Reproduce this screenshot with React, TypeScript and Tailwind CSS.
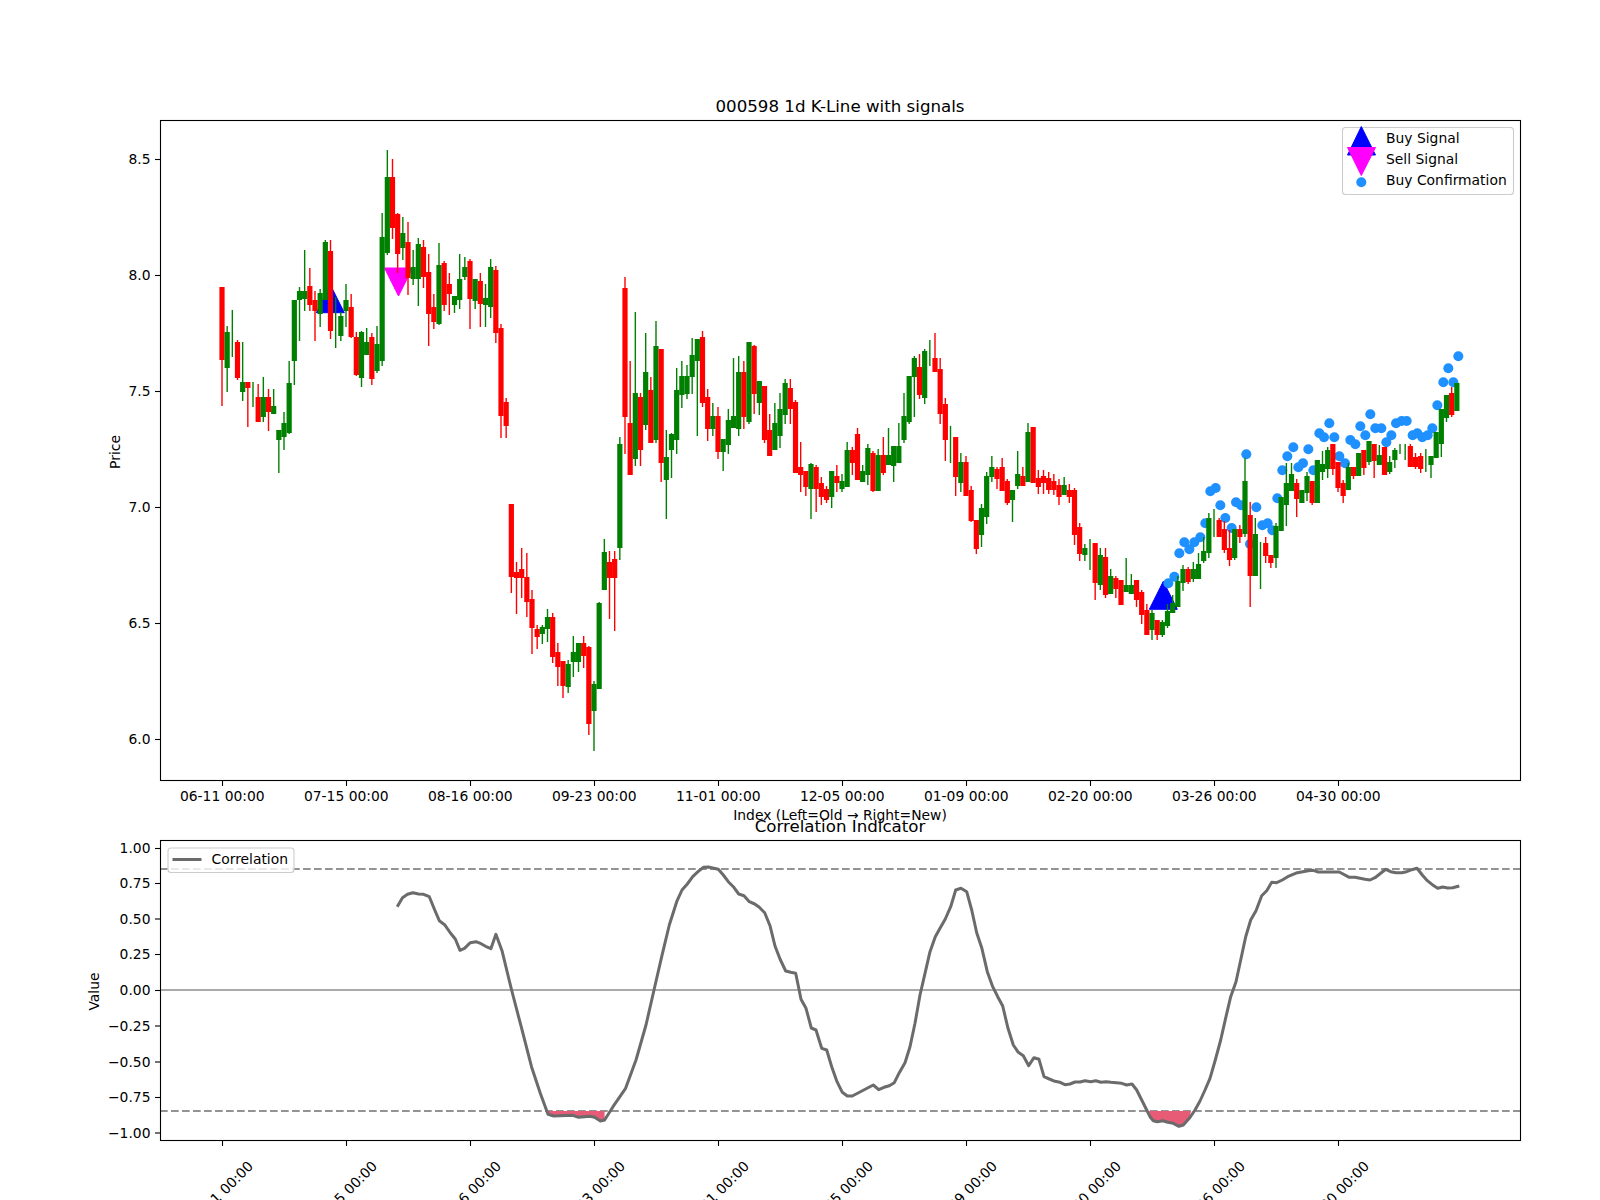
const C: number[][] = [
[1,287,406,287,360],[0,326,392,332,368],[0,310,357,0,0],[1,340,380,342,378],[0,342,401,382,392],[1,382,427,382,388],[0,382,407,0,0],[1,384,422,397,422],[0,377,422,397,417],[1,389,431,397,412],
[0,389,414,406,414],[0,430,473,430,440],[0,412,450,423,437],[0,361,434,383,433],[0,300,385,300,361],[0,287,341,291,300],[0,250,311,291,299],[1,268,311,286,305],[1,291,341,300,311],[0,289,327,293,314],
[0,240,300,242,300],[1,240,339,251,331],[0,297,348,0,0],[0,312,341,316,336],[0,284,327,300,311],[1,294,338,307,337],[1,332,376,337,375],[0,331,387,332,378],[0,328,355,342,355],[1,333,385,337,379],
[0,326,373,344,371],[0,213,366,237,361],[0,150,255,177,253],[1,159,239,177,228],[1,213,273,214,254],[0,217,260,233,248],[1,222,295,242,278],[0,250,285,267,279],[0,238,306,244,279],[1,240,288,247,277],
[1,254,346,272,314],[1,294,329,307,322],[0,243,325,265,324],[1,261,311,263,305],[1,273,315,284,294],[0,296,313,296,305],[0,254,309,279,300],[0,257,280,267,277],[1,259,329,261,299],[0,279,309,279,301],
[1,273,327,281,304],[0,284,327,298,305],[0,259,318,267,307],[1,266,343,270,333],[1,324,438,328,416],[1,398,438,402,426],[1,504,593,504,577],[1,562,614,572,578],[1,548,598,569,578],[1,553,617,577,602],
[1,590,654,599,628],[1,625,649,629,637],[0,625,644,627,634],[0,609,642,617,629],[1,613,663,617,657],[1,643,686,652,667],[1,661,698,661,686],[0,660,693,664,687],[0,636,677,652,662],[0,643,672,643,662],
[1,636,668,643,656],[1,646,735,647,724],[0,681,751,684,711],[0,602,689,603,689],[0,539,590,552,590],[1,551,619,562,578],[1,551,631,559,578],[0,437,560,444,548],[1,277,454,288,417],[1,361,475,423,475],
[0,312,466,393,459],[1,393,466,397,450],[0,333,430,372,425],[1,377,443,390,443],[0,321,443,346,440],[1,349,482,349,463],[0,430,519,457,480],[0,433,478,434,450],[0,368,454,390,440],[0,361,408,376,395],
[0,365,399,376,394],[0,338,394,355,377],[0,339,436,339,361],[1,331,407,337,403],[1,389,441,397,429],[0,403,436,416,429],[1,407,459,416,452],[0,439,471,439,452],[0,409,454,420,445],[0,358,427,416,428],
[0,356,436,372,429],[1,361,429,372,417],[0,342,424,342,422],[1,345,414,346,394],[0,381,415,381,403],[1,386,443,386,440],[1,414,456,430,456],[0,403,450,423,450],[0,393,448,409,436],[0,379,424,383,415],
[1,379,424,388,409],[1,400,473,402,473],[1,442,492,467,475],[1,471,496,471,487],[0,463,519,464,489],[1,465,512,467,489],[1,477,505,483,497],[1,486,503,489,500],[0,471,508,471,497],[1,465,492,476,483],
[0,474,492,481,489],[0,442,487,450,487],[1,447,475,450,463],[1,428,480,434,480],[0,465,482,471,482],[0,444,485,448,475],[1,451,492,453,491],[0,449,491,455,491],[1,437,475,455,473],[0,428,465,455,465],
[0,446,482,446,466],[0,423,463,446,463],[0,393,443,416,440],[0,376,424,376,422],[0,356,417,358,377],[1,354,399,367,395],[0,349,404,351,398],[0,340,366,0,0],[1,333,372,358,372],[1,358,424,369,414],
[1,398,461,404,440],[0,426,463,0,0],[1,437,496,437,477],[0,453,492,462,483],[1,456,496,462,496],[1,486,522,490,521],[1,520,554,520,549],[0,504,547,508,535],[0,472,524,476,517],[0,456,482,467,477],
[1,467,489,469,479],[1,458,491,467,491],[1,479,505,481,503],[0,490,522,490,500],[0,451,489,474,486],[1,467,486,476,486],[0,423,482,432,482],[1,427,483,427,483],[1,470,494,478,487],[1,470,494,476,483],
[1,472,494,478,490],[1,474,495,481,490],[1,479,505,485,497],[0,477,495,485,495],[1,484,503,490,497],[1,488,545,490,535],[1,523,561,527,554],[0,544,561,548,555],[0,539,570,0,0],[1,543,600,543,583],
[0,548,590,555,585],[1,548,598,557,595],[0,569,594,576,594],[1,576,598,578,589],[1,580,605,580,605],[0,558,592,585,592],[0,574,594,585,594],[1,580,607,580,600],[1,590,624,592,615],[1,604,635,610,635],
[0,610,640,613,630],[1,620,640,620,635],[0,620,637,622,635],[0,604,628,611,626],[0,595,613,603,613],[0,576,607,581,607],[0,565,591,569,583],[1,567,584,569,582],[0,562,582,569,579],[0,553,579,564,579],
[0,537,563,551,561],[0,513,558,518,553],[0,509,537,0,0],[1,518,537,520,537],[1,521,553,529,550],[1,530,566,548,560],[0,529,560,529,558],[1,525,543,529,537],[0,458,537,481,534],[1,502,607,515,576],
[0,518,576,534,576],[0,542,589,0,0],[1,537,563,543,556],[1,555,568,555,563],[0,523,568,526,558],[0,497,531,497,531],[0,463,526,483,505],[0,463,491,474,491],[1,479,517,483,499],[0,490,503,490,503],
[0,472,501,476,493],[1,481,505,481,503],[0,460,503,460,503],[0,451,480,464,472],[0,447,478,450,469],[1,444,475,444,469],[1,462,492,462,488],[1,480,503,483,496],[0,463,490,467,490],[1,467,479,467,476],
[0,453,476,453,476],[1,450,475,450,468],[0,441,465,441,462],[1,444,478,444,461],[0,445,465,455,465],[1,447,475,447,475],[0,456,474,462,472],[0,448,468,450,460],[0,444,454,0,0],[0,444,460,0,0],
[1,444,467,446,467],[1,453,469,457,467],[1,453,473,456,469],[0,449,472,0,0],[0,456,478,456,465],[0,432,458,432,458],[0,409,457,409,444],[0,395,422,395,418],[1,387,417,393,415],[0,383,411,383,411],
];

const D: number[][] = [
[1075,49],[1045,85],[1030,127],[1060,127],[1012,196],[811,223],[688,250],[781,259],[905,243],[888,250],[920,243],[826,265],[844,265],[658,280],[672,292],[703,292],[625,328],[580,322],[562,349],[874,286],[796,286],[751,300],[766,313],[859,307],[938,286],[952,280],[967,292],[983,286],[997,265],[718,349],[735,370],[640,391],[609,370],[595,382],[547,391],[439,343],[347,444],[331,454],[361,496],[408,487],[423,496],[469,502],[532,475],[376,534],[316,550],[301,592],[283,607],[268,628],[253,607],[238,640],[223,710],[205,730],[395,564],[487,556],[503,550],[517,571],[450,612],
];

const L: number[][] = [
[397.2,906.7],[402.5,897.7],[407.5,894.3],[412.8,892.7],[418.6,894],[423.6,894.3],[429.3,896.7],[434.3,909],[439.3,920.7],[444.6,924.7],[450.4,933],[455.3,939],[460,950.3],[464.5,948.3],[470.3,942.7],[476,941.7],[481,943.7],[485.6,946.3],[490.9,948.7],[495.9,934.3],[502,950.7],[511.6,990],[521.2,1026.7],[531.5,1066.7],[540.3,1093.3],[548,1114.3],[553.7,1116],[572.8,1115.3],[578.6,1117.3],[590,1116.3],[594.6,1117.3],[600.4,1121],[604.6,1120],[613,1106.7],[625.6,1088.3],[636,1060],[646,1025],[654,990],[661.7,956.7],[669.3,925],[676.7,901.7],[682,890],[687.3,884],[692.7,876.7],[698,871.7],[703.3,867.3],[708.3,867],[718.3,869.3],[723.3,875],[728.3,881.7],[733.3,886.7],[738.7,894],[744,895.7],[749.3,901.7],[754.7,904],[759.3,907.3],[764.7,912.7],[770,925.7],[775,946],[780,959],[785.7,971],[790.7,972.3],[795.7,973.3],[801,999.3],[806,1008.3],[811.3,1028],[816,1030],[821.7,1048.3],[826.7,1050],[831.7,1066.7],[837,1081.7],[842.3,1092.3],[847.3,1096],[852.3,1096],[873.3,1085],[878.7,1089.7],[884,1087.3],[889.3,1085.7],[894.3,1082.7],[899.3,1072.7],[905,1062.7],[910,1046.7],[915,1023.3],[920,995],[925,973.3],[930,951.7],[935.3,936.7],[940,928.3],[945.3,919],[950.7,906.7],[955.7,890],[961,888.3],[966.7,891.7],[971.7,910],[976.7,932.7],[981.7,947.7],[987.3,971.7],[992.7,986.7],[997.7,996.7],[1002.7,1006],[1008,1028.3],[1013.3,1045],[1018.3,1052.3],[1023.3,1055.7],[1028.7,1065.7],[1034,1057.7],[1039,1059.3],[1044,1076.7],[1049.3,1079],[1055,1081.3],[1060,1082.3],[1065,1084.7],[1070,1084],[1075,1082],[1080,1082],[1085,1080.7],[1090.7,1081.7],[1095.7,1080.7],[1101,1082.3],[1106,1081.7],[1111,1082.3],[1121.7,1083.3],[1126.7,1085],[1132,1084],[1136.7,1090],[1141.7,1100],[1146.7,1110],[1150,1116.7],[1153.3,1120.7],[1157.3,1121.7],[1162.7,1120.7],[1167.7,1122.3],[1173.3,1123.3],[1179,1126.3],[1183.3,1125],[1189.3,1118.3],[1195,1110],[1200,1101],[1205,1090],[1210,1078.3],[1215.3,1060],[1220.7,1040],[1226,1016.7],[1230.7,996.7],[1236,981.7],[1240.7,960],[1245.7,936.7],[1250.7,920],[1256,910.7],[1261.7,895.7],[1266.7,890.7],[1271.7,882.3],[1276.7,882.7],[1282.3,880],[1287.7,876.7],[1297.3,872.7],[1308.3,870.7],[1313.3,870.3],[1318.3,872],[1339.3,872],[1349.3,877.3],[1355,877.3],[1365,879.3],[1370,880],[1375,877.7],[1385.7,869.3],[1390.7,871.7],[1396,872.7],[1401.7,872.7],[1406.7,871.7],[1411.7,869.7],[1417,868.3],[1422.3,875],[1427.3,880.7],[1432.3,884.7],[1437.7,888.3],[1442.7,887],[1447.7,888],[1452.7,887.7],[1459.3,886],
];

const TICK_LABELS = ["06-11 00:00","07-15 00:00","08-16 00:00","09-23 00:00","11-01 00:00","12-05 00:00","01-09 00:00","02-20 00:00","03-26 00:00","04-30 00:00"];
const tickX = (k: number) => 222.5 + 124 * k;
const P1 = [["8.5",159.5],["8.0",275.5],["7.5",391.5],["7.0",507.5],["6.5",623.5],["6.0",739.5]] as const;
const P2 = [["1.00",848.5],["0.75",883.5],["0.50",919],["0.25",954.5],["0.00",990.5],["−0.25",1026],["−0.50",1062],["−0.75",1097.5],["−1.00",1133]] as const;

const linePts = L.map((p) => p.join(",")).join(" ");
const tri = (cx: number, base: number, dir: 1 | -1) => `${cx},${base - dir * 28} ${cx - 14},${base} ${cx + 14},${base}`;

function YTicks({ ticks }: { ticks: readonly (readonly [string, number])[] }) {
  return (
    <>
      {ticks.map(([t, y]) => (
        <g key={t}>
          <line x1={155} x2={160} y1={y} y2={y} stroke="#000" strokeWidth={1.1} />
          <text x={150.5} y={y - 0.35} textAnchor="end" dominantBaseline="central">{t}</text>
        </g>
      ))}
    </>
  );
}

export default function App() {
  return (
    <div className="w-[1600px] h-[1200px] overflow-hidden bg-white flex flex-col font-['DejaVu_Sans',sans-serif] text-[13.89px] text-black">
      <svg viewBox="0 0 1600 810" className="w-[1600px] h-[810px] shrink-0 overflow-visible" fill="#000">
        <polygon points={tri(330.3, 312.7, 1)} fill="#0000ff" stroke="#0000ff" />
        <polygon points={tri(398.5, 268, -1)} fill="#ff00ff" stroke="#ff00ff" />
        <polygon points={tri(1163.3, 609.3, 1)} fill="#0000ff" stroke="#0000ff" />
        {D.map(([x, y], i) => (
          <circle key={i} cx={1100 + x / 3} cy={340 + y / 3} r={5} fill="#1e90ff" />
        ))}
        {C.map(([r, wt, wb, bt, bb], i) => {
          const x = 222 + i * 5.1667;
          const col = r ? "#ff0000" : "#008000";
          return (
            <g key={i}>
              <line x1={x} x2={x} y1={wt} y2={wb} stroke={col} strokeWidth={1.4} />
              {bb > bt && <rect x={x - 2.6} y={bt} width={5.2} height={bb - bt} fill={col} />}
            </g>
          );
        })}
        <rect x={160.5} y={120.5} width={1360} height={660} fill="none" stroke="#000" strokeWidth={1.1} />
        <YTicks ticks={P1} />
        {TICK_LABELS.map((t, k) => (
          <g key={t}>
            <line x1={tickX(k)} x2={tickX(k)} y1={781} y2={786} stroke="#000" strokeWidth={1.1} />
            <text x={tickX(k) - 0.2} y={796} textAnchor="middle" dominantBaseline="central">{t}</text>
          </g>
        ))}
        <text x={840} y={106} textAnchor="middle" dominantBaseline="central" className="text-[16.67px]">000598 1d K-Line with signals</text>
        <text x={840} y={815} textAnchor="middle" dominantBaseline="central">Index (Left=Old → Right=New)</text>
        <text textAnchor="middle" dominantBaseline="central" transform="translate(115 452) rotate(-90)">Price</text>
        <rect x={1342.5} y={127.5} width={171} height={67} rx={3} fill="#fff" fillOpacity={0.8} stroke="#ccc" strokeWidth={1.1} />
        <polygon points="1361.3,126.5 1347.5,155 1375.5,155" fill="#0000ff" stroke="#0000ff" />
        <polygon points="1361.3,175.5 1347.5,147.5 1375.5,147.5" fill="#ff00ff" stroke="#ff00ff" />
        <circle cx={1361.3} cy={182.3} r={5} fill="#1e90ff" />
        <text x={1386} y={138} dominantBaseline="central">Buy Signal</text>
        <text x={1386} y={159} dominantBaseline="central">Sell Signal</text>
        <text x={1386} y={180} dominantBaseline="central">Buy Confirmation</text>
      </svg>
      <svg viewBox="0 810 1600 390" className="w-[1600px] h-[390px] shrink-0" fill="#000">
        <line x1={160} x2={1520} y1={990} y2={990} stroke="#aaaaaa" strokeWidth={2} />
        <line x1={160} x2={1520} y1={869} y2={869} stroke="#808080" strokeOpacity={0.85} strokeWidth={2.08} strokeDasharray="7.7 3.3" />
        <line x1={160} x2={1520} y1={1111} y2={1111} stroke="#808080" strokeOpacity={0.85} strokeWidth={2.08} strokeDasharray="7.7 3.3" />
        <polygon points="548,1111 604.6,1111 604.6,1120 600.4,1121 594.6,1117.3 590,1116.3 578.6,1117.3 572.8,1115.3 553.7,1116 548,1114.3" fill="#e75b77" />
        <polygon points="1149,1111 1191,1111 1189.3,1118.3 1183.3,1125 1179,1126.3 1173.3,1123.3 1167.7,1122.3 1162.7,1120.7 1157.3,1121.7 1153.3,1120.7 1150,1116.7" fill="#e75b77" />
        <polyline points={linePts} fill="none" stroke="#6b6b6b" strokeWidth={3} strokeLinejoin="round" />
        <rect x={160.5} y={840.5} width={1360} height={300} fill="none" stroke="#000" strokeWidth={1.1} />
        <YTicks ticks={P2} />
        {TICK_LABELS.map((t, k) => (
          <g key={t}>
            <line x1={tickX(k)} x2={tickX(k)} y1={1141} y2={1146} stroke="#000" strokeWidth={1.1} />
            <text textAnchor="middle" dominantBaseline="central" transform={`translate(${tickX(k) - 2} 1193.5) rotate(-45)`}>{t}</text>
          </g>
        ))}
        <text x={840} y={826} textAnchor="middle" dominantBaseline="central" className="text-[16.67px]">Correlation Indicator</text>
        <text textAnchor="middle" dominantBaseline="central" transform="translate(93.5 991.5) rotate(-90)">Value</text>
        <rect x={168} y={848} width={126} height={24.5} rx={3} fill="#fff" fillOpacity={0.8} stroke="#ccc" strokeWidth={1.1} />
        <line x1={172.5} x2={201.5} y1={859.5} y2={859.5} stroke="#6b6b6b" strokeWidth={3} />
        <text x={211.5} y={859} dominantBaseline="central">Correlation</text>
      </svg>
    </div>
  );
}
